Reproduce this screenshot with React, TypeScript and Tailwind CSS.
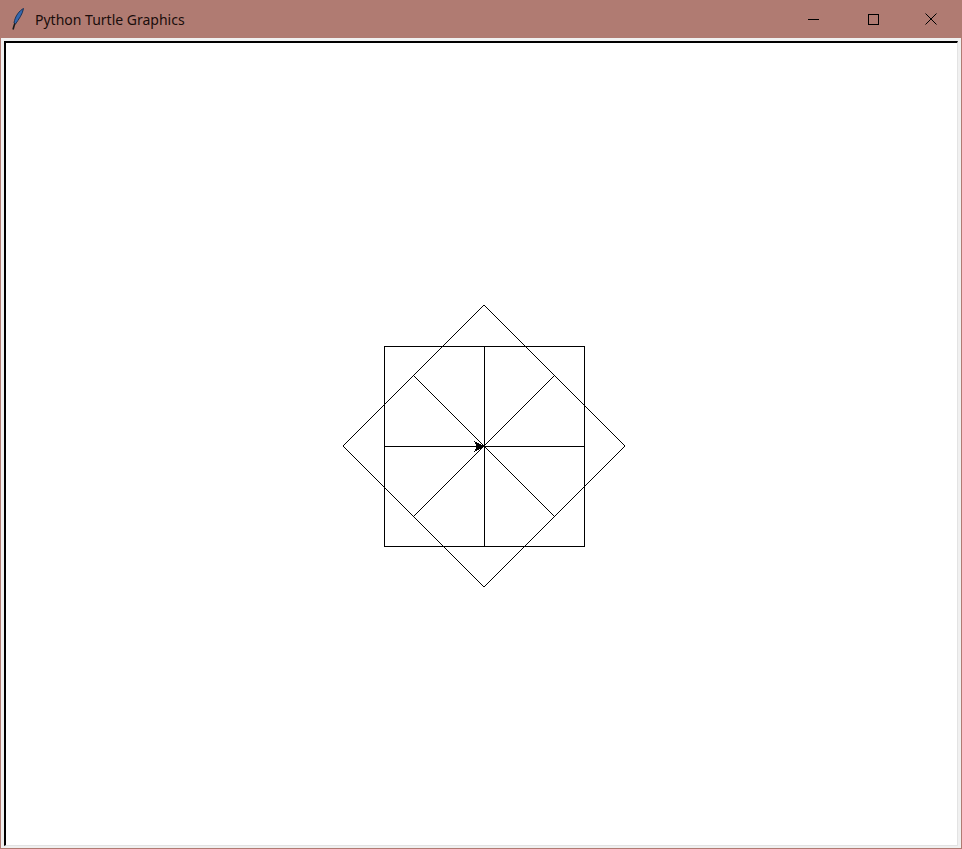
import React from 'react';

// Title bar of the Tk window
function TitleBar() {
  return (
    <div className="flex h-[38px] items-center bg-[#b07b72]">
      <svg width="14" height="22" viewBox="0 0 14 22" className="ml-[11px]">
        <path d="M12.5 0.5 C8.5 2.5 4 8 3 15 L4.5 16 C7.5 11.5 11.5 6.5 12.5 0.5 Z" fill="#3468b0" stroke="#1b3356" strokeWidth="1" />
        <path d="M3.8 15.5 L2 21.5" stroke="#1a1a1a" strokeWidth="1.6" />
      </svg>
      <span className="ml-[10px] text-[14px] text-[#1a0d0b]" style={{ fontFamily: '"Noto Sans", "Open Sans", sans-serif' }}>
        Python Turtle Graphics
      </span>
      <div className="ml-auto flex h-full pr-[2px]">
        <div className="flex w-[58px] items-center justify-center pr-[3px]">
          <div className="h-px w-[11px] bg-black" />
        </div>
        <div className="flex w-[58px] items-center justify-center">
          <div className="h-[11px] w-[11px] border border-black" />
        </div>
        <div className="flex w-[58px] items-center justify-center">
          <svg width="12" height="12" viewBox="0 0 12 12">
            <path d="M0.5 0.5 L11.5 11.5 M11.5 0.5 L0.5 11.5" stroke="#000" strokeWidth="1" />
          </svg>
        </div>
      </div>
    </div>
  );
}

// Drawing, in canvas-content coordinates (page minus 6,43)
function Drawing() {
  const cx = 478;
  const cy = 403;
  const h = 100;
  const r = 141;
  const d = 71;
  return (
    <svg className="absolute inset-0 h-full w-full" shapeRendering="crispEdges">
      <g stroke="#000" strokeWidth="1" fill="none">
        <rect x={cx - h + 0.5} y={cy - h + 0.5} width={2 * h} height={2 * h} />
        <line x1={cx + 0.5} y1={cy - h} x2={cx + 0.5} y2={cy + h} />
        <line x1={cx - h} y1={cy + 0.5} x2={cx + h} y2={cy + 0.5} />
      </g>
      <g stroke="#000" strokeWidth="1" fill="none" shapeRendering="auto">
        <polygon points={`${cx},${cy - r} ${cx + r},${cy} ${cx},${cy + r} ${cx - r},${cy}`} />
        <line x1={cx - d} y1={cy - d} x2={cx + d} y2={cy + d} />
        <line x1={cx + d} y1={cy - d} x2={cx - d} y2={cy + d} />
      </g>
      <polygon
        points={`${cx + 1},${cy + 0.5} ${cx - 10},${cy - 5} ${cx - 7},${cy + 0.5} ${cx - 10},${cy + 6}`}
        fill="#000"
      />
    </svg>
  );
}

export default function App() {
  return (
    <div className="flex h-[849px] w-[962px] flex-col bg-[#b07b72]">
      <TitleBar />
      <div className="mx-px mb-px flex flex-1 flex-col bg-[#f0f0f0] pl-[3px] pr-[3px] pt-[3px] pb-[2px]">
        <div className="relative flex-1 border-l-2 border-t-2 border-b border-r border-l-black border-t-black border-b-[#e3e3e3] border-r-[#e3e3e3] bg-white">
          <Drawing />
        </div>
      </div>
    </div>
  );
}
